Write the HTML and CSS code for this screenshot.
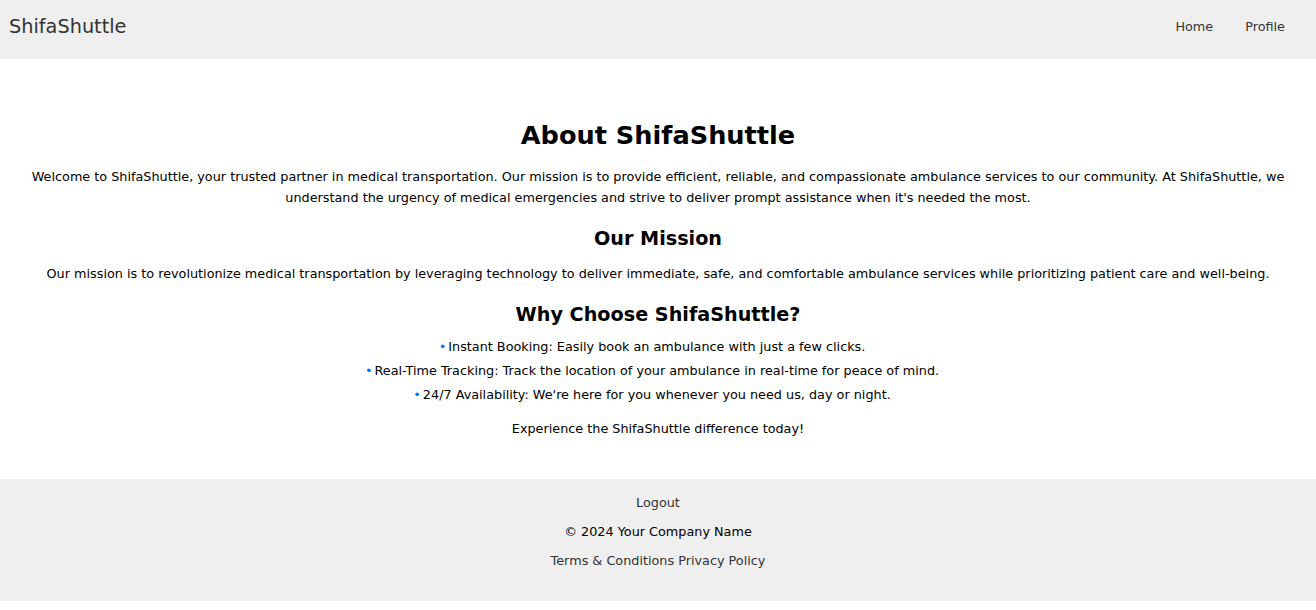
FILE: index.html
```html
<!DOCTYPE html>
<html lang="en">
<head>
<meta charset="utf-8">
<title>About ShifaShuttle</title>
<link rel="stylesheet" href="styles.css">
</head>
<body>
<header class="topbar">
  <a class="brand" href="#">ShifaShuttle</a>
  <nav class="nav">
    <a class="nav-link" href="#">Home</a>
    <a class="nav-link" href="#">Profile</a>
  </nav>
</header>
<main class="about">
  <h1 class="title">About ShifaShuttle</h1>
  <p class="text">Welcome to ShifaShuttle, your trusted partner in medical transportation. Our mission is to provide efficient, reliable, and compassionate ambulance services to our community. At ShifaShuttle, we understand the urgency of medical emergencies and strive to deliver prompt assistance when it's needed the most.</p>
  <h2 class="subtitle">Our Mission</h2>
  <p class="text">Our mission is to revolutionize medical transportation by leveraging technology to deliver immediate, safe, and comfortable ambulance services while prioritizing patient care and well-being.</p>
  <h2 class="subtitle">Why Choose ShifaShuttle?</h2>
  <ul class="features">
    <li class="feature">Instant Booking: Easily book an ambulance with just a few clicks.</li>
    <li class="feature">Real-Time Tracking: Track the location of your ambulance in real-time for peace of mind.</li>
    <li class="feature">24/7 Availability: We're here for you whenever you need us, day or night.</li>
  </ul>
  <p class="text closing">Experience the ShifaShuttle difference today!</p>
</main>
<footer class="footer">
  <a class="footer-link" href="#">Logout</a>
  <p class="copyright">© 2024 Your Company Name</p>
  <div class="footer-links">
    <a class="footer-link" href="#">Terms &amp; Conditions</a>
    <a class="footer-link" href="#">Privacy Policy</a>
  </div>
</footer>
</body>
</html>
```
FILE: styles.css
```css
* { box-sizing: border-box; }
html, body { margin: 0; padding: 0; }
body {
  font-family: "DejaVu Sans", sans-serif;
  color: #000;
  background: #fff;
  padding-bottom: 9px;
}
a { text-decoration: none; }

.topbar {
  height: 59px;
  background: #efefef;
  display: flex;
  align-items: center;
  justify-content: space-between;
  padding: 0 15px 6px 9px;
}
.brand {
  font-size: 19.3px;
  color: #333;
}
.nav { display: flex; }
.nav-link {
  font-size: 12.8px;
  color: #333;
  padding: 0 16px;
}

.about {
  text-align: center;
  padding: 61px 20px 40px;
}
.title {
  font-size: 25.6px;
  line-height: 31px;
  margin: 0 0 15px;
}
.subtitle {
  font-size: 19.2px;
  line-height: 24px;
  margin: 19px 0 9px;
}
.text {
  font-size: 12.8px;
  line-height: 21px;
  margin: 0;
}
.subtitle + .text { margin-top: 12px; }
.features {
  list-style: none;
  margin: 0;
  padding: 0 12px 0 0;
}
.feature {
  font-size: 12.8px;
  line-height: 21px;
  margin-bottom: 3px;
}
.feature::before {
  content: "•";
  color: #007bff;
  margin-right: 2px;
}
.closing { margin-top: 13px; }

.footer {
  background: #efefef;
  text-align: center;
  padding: 13px 0 30px;
  display: flex;
  flex-direction: column;
  align-items: center;
  gap: 8px;
}
.footer-link {
  font-size: 12.8px;
  line-height: 21px;
  color: #333;
}
.copyright {
  font-size: 12.8px;
  line-height: 21px;
  margin: 0;
}
.footer-links { display: flex; gap: 4px; }
```
